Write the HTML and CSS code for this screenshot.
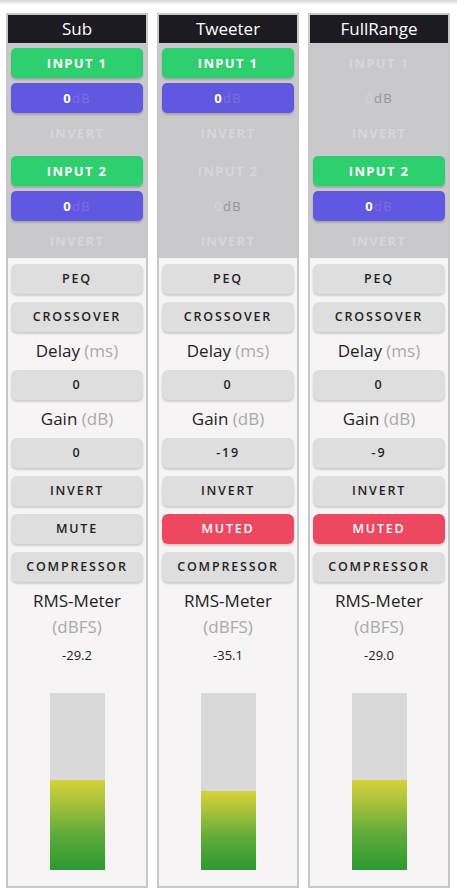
FILE: index.html
```html
<!DOCTYPE html>
<html>
<head>
<meta charset="utf-8">
<link rel="stylesheet" href="styles.css">
</head>
<body>
<div class="topstrip"></div>
<div class="channels">
  <div class="channel">
    <div class="ch-title">Sub</div>
    <div class="inputs">
      <div class="in-group">
        <div class="ibtn on-green">INPUT 1</div>
        <div class="ibtn on-blue"><span class="num">0</span><span class="unit">dB</span></div>
        <div class="ibtn off">INVERT</div>
      </div>
      <div class="in-group">
        <div class="ibtn on-green">INPUT 2</div>
        <div class="ibtn on-blue"><span class="num">0</span><span class="unit">dB</span></div>
        <div class="ibtn off">INVERT</div>
      </div>
    </div>
    <div class="controls">
      <div class="btn">PEQ</div>
      <div class="btn">CROSSOVER</div>
      <div class="label">Delay <span class="muted">(ms)</span></div>
      <div class="btn">0</div>
      <div class="label">Gain <span class="muted">(dB)</span></div>
      <div class="btn">0</div>
      <div class="btn">INVERT</div>
      <div class="btn">MUTE</div>
      <div class="btn">COMPRESSOR</div>
      <div class="rms">
        <div class="label">RMS-Meter</div>
        <div class="label muted dbfs">(dBFS)</div>
        <div class="value">-29.2</div>
        <div class="meter"><div class="fill" style="height:51%"></div></div>
      </div>
    </div>
  </div>

  <div class="channel">
    <div class="ch-title">Tweeter</div>
    <div class="inputs">
      <div class="in-group">
        <div class="ibtn on-green">INPUT 1</div>
        <div class="ibtn on-blue"><span class="num">0</span><span class="unit">dB</span></div>
        <div class="ibtn off">INVERT</div>
      </div>
      <div class="in-group">
        <div class="ibtn off">INPUT 2</div>
        <div class="ibtn off-db"><span class="num">0</span><span class="unit">dB</span></div>
        <div class="ibtn off">INVERT</div>
      </div>
    </div>
    <div class="controls">
      <div class="btn">PEQ</div>
      <div class="btn">CROSSOVER</div>
      <div class="label">Delay <span class="muted">(ms)</span></div>
      <div class="btn">0</div>
      <div class="label">Gain <span class="muted">(dB)</span></div>
      <div class="btn">-19</div>
      <div class="btn">INVERT</div>
      <div class="btn red">MUTED</div>
      <div class="btn">COMPRESSOR</div>
      <div class="rms">
        <div class="label">RMS-Meter</div>
        <div class="label muted dbfs">(dBFS)</div>
        <div class="value">-35.1</div>
        <div class="meter"><div class="fill" style="height:44.6%"></div></div>
      </div>
    </div>
  </div>

  <div class="channel">
    <div class="ch-title">FullRange</div>
    <div class="inputs">
      <div class="in-group">
        <div class="ibtn off">INPUT 1</div>
        <div class="ibtn off-db"><span class="num">0</span><span class="unit">dB</span></div>
        <div class="ibtn off">INVERT</div>
      </div>
      <div class="in-group">
        <div class="ibtn on-green">INPUT 2</div>
        <div class="ibtn on-blue"><span class="num">0</span><span class="unit">dB</span></div>
        <div class="ibtn off">INVERT</div>
      </div>
    </div>
    <div class="controls">
      <div class="btn">PEQ</div>
      <div class="btn">CROSSOVER</div>
      <div class="label">Delay <span class="muted">(ms)</span></div>
      <div class="btn">0</div>
      <div class="label">Gain <span class="muted">(dB)</span></div>
      <div class="btn">-9</div>
      <div class="btn">INVERT</div>
      <div class="btn red">MUTED</div>
      <div class="btn">COMPRESSOR</div>
      <div class="rms">
        <div class="label">RMS-Meter</div>
        <div class="label muted dbfs">(dBFS)</div>
        <div class="value">-29.0</div>
        <div class="meter"><div class="fill" style="height:51%"></div></div>
      </div>
    </div>
  </div>
</div>
</body>
</html>
```

FILE: styles.css
```css
* { box-sizing: border-box; }
html, body {
  margin: 0;
  padding: 0;
  background: #ffffff;
  font-family: "Open Sans", "Noto Sans", "DejaVu Sans", sans-serif;
}
.topstrip {
  height: 5px;
  background: linear-gradient(to bottom, #d4d4d4, #ffffff);
}
.channels {
  display: flex;
  gap: 9px;
  padding: 8px 0 0 6px;
}
.channel {
  width: 142px;
  border: 2px solid #c8c8c8;
  display: flex;
  flex-direction: column;
  background: #f6f4f5;
}
.ch-title {
  height: 28px;
  background: #1b1b21;
  color: #ffffff;
  font-size: 17px;
  line-height: 28px;
  text-align: center;
}
.inputs {
  background: #c9c9cb;
  padding: 5px 3px 2px;
  display: flex;
  flex-direction: column;
  gap: 8px;
}
.in-group {
  display: flex;
  flex-direction: column;
  gap: 5px;
}
.ibtn {
  height: 30px;
  border-radius: 5px;
  font-size: 13px;
  font-weight: 700;
  letter-spacing: 1.3px;
  line-height: 30px;
  text-align: center;
  color: #ffffff;
}
.on-green {
  background: #2dcf6e;
  box-shadow: 0 2px 2px rgba(0,0,0,0.18);
}
.on-blue {
  background: #6158e1;
  box-shadow: 0 2px 2px rgba(0,0,0,0.18);
}
.on-blue .unit {
  color: #776fe4;
  font-weight: 400;
}
.off {
  color: #d7d7d9;
}
.off-db {
  font-weight: 400;
}
.off-db .num { color: #d4d4d6; }
.off-db .unit { color: #959597; }
.controls {
  padding: 6px 3px 16px;
  display: flex;
  flex-direction: column;
  gap: 8px;
}
.btn {
  height: 30px;
  border-radius: 6px;
  background: #dedede;
  box-shadow: 0 2px 2px rgba(0,0,0,0.16);
  color: #1e1e22;
  font-size: 12.5px;
  font-weight: 600;
  letter-spacing: 1.8px;
  line-height: 30px;
  text-align: center;
}
.btn.red {
  background: #ee4860;
  color: #ffffff;
}
.label {
  height: 22px;
  line-height: 22px;
  font-size: 17px;
  text-align: center;
  color: #1e1e22;
}
.muted {
  color: #a9a9ab;
}
.rms {
  display: flex;
  flex-direction: column;
  align-items: center;
}
.rms .label { width: 100%; }
.dbfs { margin-top: 4px; }
.value {
  margin-top: 8px;
  height: 18px;
  line-height: 18px;
  font-size: 13px;
  color: #1e1e22;
}
.meter {
  margin-top: 29px;
  width: 55px;
  height: 177px;
  background: #d9d9d9;
  display: flex;
  flex-direction: column;
  justify-content: flex-end;
}
.fill {
  width: 100%;
  background: linear-gradient(to bottom, #d5d33a 0%, #a9c23a 25%, #5eab3a 60%, #2e9933 100%);
}
```
